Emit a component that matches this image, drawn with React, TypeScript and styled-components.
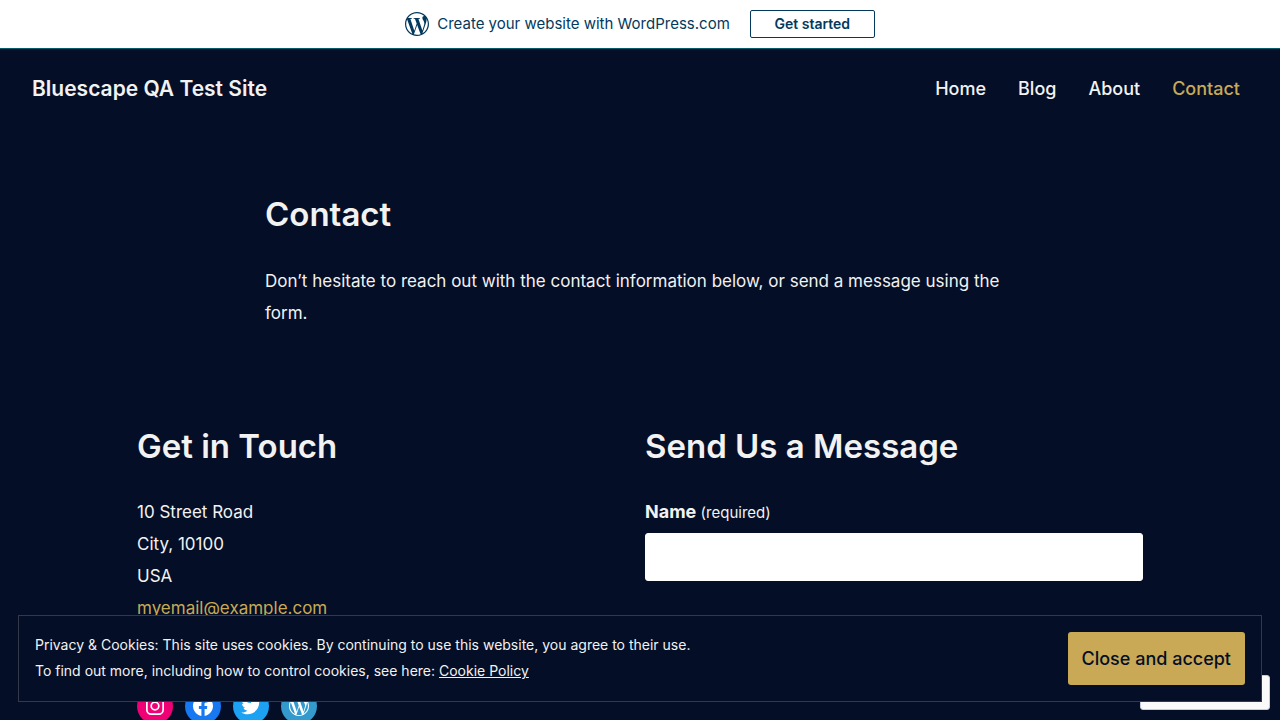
import React from "react";
import styled, { createGlobalStyle } from "styled-components";

const navy = "#040e26";
const text = "#f2f2f2";
const gold = "#c9a955";
const teal = "#02395c";

const GlobalStyle = createGlobalStyle`
  *, *::before, *::after { box-sizing: border-box; }
  body {
    margin: 0;
    background: ${navy};
    color: ${text};
    font-family: Inter, "Liberation Sans", sans-serif;
    font-size: 17px;
    line-height: 32px;
  }
`;

const PromoBar = styled.div`
  display: flex;
  align-items: center;
  justify-content: center;
  height: 49px;
  background: #fff;
  border-bottom: 1px solid #055d6b;
  color: ${teal};
  font-size: 15px;
`;

const PromoText = styled.span`
  margin: 0 20px 0 8px;
`;

const PromoButton = styled.button`
  width: 125px;
  height: 28px;
  padding: 0;
  border: 1px solid ${teal};
  border-radius: 2px;
  background: #fff;
  color: ${teal};
  font: 600 14px/20px Inter, "Liberation Sans", sans-serif;
`;

const Header = styled.header`
  display: flex;
  align-items: center;
  justify-content: space-between;
  padding: 24px 40px 24px 32px;
`;

const SiteTitle = styled.a`
  color: ${text};
  font-size: 21px;
  font-weight: 600;
  text-decoration: none;
`;

const Nav = styled.nav`
  display: flex;
  gap: 32px;
`;

const NavLink = styled.a<{ $current?: boolean }>`
  color: ${(p) => (p.$current ? gold : text)};
  font-size: 18px;
  font-weight: 500;
  text-decoration: none;
`;

const Intro = styled.section`
  max-width: 750px;
  margin: 61px auto 0;
`;

const Title = styled.h1`
  margin: 0 0 27px;
  font-size: 33px;
  line-height: 48px;
  font-weight: 600;
`;

const Paragraph = styled.p`
  margin: 0;
`;

const Columns = styled.div`
  display: grid;
  grid-template-columns: 1fr 1fr;
  gap: 10px;
  max-width: 1006px;
  margin: 93px auto 0;
`;

const SectionTitle = styled(Title).attrs({ as: "h2" })`
  margin-bottom: 26px;
`;

const Address = styled.address`
  font-style: normal;
`;

const MailLink = styled.a`
  color: ${gold};
  text-decoration: none;
`;

const SocialList = styled.ul`
  display: flex;
  gap: 12px;
  margin: 64px 0 0;
  padding: 0;
  list-style: none;
`;

const SocialLink = styled.a<{ $color: string }>`
  display: flex;
  align-items: center;
  justify-content: center;
  width: 36px;
  height: 36px;
  border-radius: 50%;
  background: ${(p) => p.$color};
  color: #fff;
`;

const Label = styled.label`
  display: block;
  margin-bottom: 4px;
  font-size: 18px;
  font-weight: 700;
`;

const Required = styled.span`
  font-size: 15px;
  font-weight: 400;
`;

const TextField = styled.input`
  display: block;
  width: 100%;
  height: 48px;
  padding: 0 16px;
  border: 1px solid #fff;
  border-radius: 3px;
  background: #fff;
  font: inherit;
`;

const FollowWidget = styled.button`
  position: fixed;
  right: 10px;
  bottom: 10px;
  width: 130px;
  height: 35px;
  padding: 0;
  border: 1px solid #c3d0dc;
  border-radius: 3px;
  background: #fafafa;
`;

const CookieBanner = styled.aside`
  position: fixed;
  right: 18px;
  bottom: 18px;
  left: 18px;
  display: flex;
  align-items: flex-start;
  justify-content: space-between;
  padding: 16px;
  border: 1px solid #33394a;
  background: ${navy};
  font-size: 14px;
  line-height: 26px;
`;

const PolicyLink = styled.a`
  color: inherit;
`;

const AcceptButton = styled.button`
  height: 53px;
  padding: 0 14px;
  border: 0;
  border-radius: 3px;
  background: ${gold};
  color: ${navy};
  font: 500 18px/32px Inter, "Liberation Sans", sans-serif;
`;

const Glyph = ({ size, children }: { size: number; children: React.ReactNode }) => (
  <svg width={size} height={size} viewBox="0 0 24 24" fill="currentColor" aria-hidden="true">
    {children}
  </svg>
);

const wordpressPath =
  "M12.158,12.786L9.46,20.625c0.806,0.237,1.657,0.366,2.54,0.366c1.047,0,2.051-0.181,2.986-0.51c-0.024-0.038-0.046-0.079-0.065-0.124L12.158,12.786z M3.009,12c0,3.559,2.068,6.634,5.067,8.092L3.788,8.341C3.289,9.459,3.009,10.696,3.009,12z M18.069,11.546c0-1.112-0.399-1.881-0.741-2.48c-0.456-0.741-0.883-1.368-0.883-2.109c0-0.826,0.627-1.596,1.51-1.596c0.04,0,0.078,0.005,0.116,0.007C16.472,3.904,14.34,3.009,12,3.009c-3.141,0-5.904,1.612-7.512,4.052c0.211,0.007,0.41,0.011,0.579,0.011c0.94,0,2.396-0.114,2.396-0.114C7.947,6.93,8.004,7.642,7.52,7.699c0,0-0.487,0.057-1.029,0.085l3.274,9.739l1.968-5.901l-1.401-3.838C9.848,7.756,9.389,7.699,9.389,7.699C8.904,7.67,8.961,6.93,9.446,6.958c0,0,1.484,0.114,2.368,0.114c0.94,0,2.397-0.114,2.397-0.114c0.485-0.028,0.542,0.684,0.057,0.741c0,0-0.488,0.057-1.029,0.085l3.249,9.665l0.897-2.996C17.841,13.284,18.069,12.316,18.069,11.546z M19.889,7.686c0.039,0.286,0.06,0.593,0.06,0.924c0,0.912-0.171,1.938-0.684,3.22l-2.746,7.94c2.673-1.558,4.47-4.454,4.47-7.771C20.991,10.436,20.591,8.967,19.889,7.686z M12,22C6.486,22,2,17.514,2,12C2,6.486,6.486,2,12,2c5.514,0,10,4.486,10,10C22,17.514,17.514,22,12,22z";
const facebookPath =
  "M12 2C6.5 2 2 6.5 2 12c0 5 3.7 9.1 8.4 9.9v-7H7.9V12h2.5V9.8c0-2.5 1.5-3.9 3.8-3.9 1.1 0 2.2.2 2.2.2v2.5h-1.3c-1.2 0-1.6.8-1.6 1.6V12h2.8l-.4 2.9h-2.3v7C18.3 21.1 22 17 22 12c0-5.5-4.5-10-10-10z";
const twitterPath =
  "M22.23,5.924c-0.736,0.326-1.527,0.547-2.357,0.646c0.847-0.508,1.498-1.312,1.804-2.27c-0.793,0.47-1.671,0.812-2.606,0.996C18.324,4.498,17.257,4,16.077,4c-2.266,0-4.103,1.837-4.103,4.103c0,0.322,0.036,0.635,0.106,0.935C8.67,8.867,5.647,7.234,3.623,4.751C3.27,5.357,3.067,6.062,3.067,6.814c0,1.424,0.724,2.679,1.825,3.415c-0.673-0.021-1.305-0.206-1.859-0.513c0,0.017,0,0.034,0,0.052c0,1.988,1.414,3.647,3.292,4.023c-0.344,0.094-0.707,0.144-1.081,0.144c-0.264,0-0.521-0.026-0.772-0.074c0.522,1.63,2.038,2.816,3.833,2.85c-1.404,1.1-3.174,1.756-5.096,1.756c-0.331,0-0.658-0.019-0.979-0.057c1.816,1.164,3.973,1.843,6.29,1.843c7.547,0,11.675-6.252,11.675-11.675c0-0.178-0.004-0.355-0.012-0.531C20.985,7.47,21.68,6.747,22.23,5.924z";

const socials = [
  {
    name: "Instagram",
    color: "#f00075",
    art: (
      <g fill="none" stroke="currentColor" strokeWidth="1.7">
        <rect x="3.85" y="3.85" width="16.3" height="16.3" rx="4.4" />
        <circle cx="12" cy="12" r="3.8" />
        <circle cx="16.8" cy="7.2" r="1.1" fill="currentColor" stroke="none" />
      </g>
    ),
  },
  { name: "Facebook", color: "#1778f2", art: <path d={facebookPath} /> },
  { name: "Twitter", color: "#1da1f2", art: <path d={twitterPath} /> },
  { name: "WordPress", color: "#3499cd", art: <path d={wordpressPath} /> },
];

export default function App() {
  return (
    <>
      <GlobalStyle />
      <PromoBar>
        <svg width="24" height="24" viewBox="2 2 20 20" fill="currentColor" aria-hidden="true">
          <path d={wordpressPath} />
        </svg>
        <PromoText>Create your website with WordPress.com</PromoText>
        <PromoButton>Get started</PromoButton>
      </PromoBar>
      <Header>
        <SiteTitle href="#">Bluescape QA Test Site</SiteTitle>
        <Nav>
          <NavLink href="#">Home</NavLink>
          <NavLink href="#">Blog</NavLink>
          <NavLink href="#">About</NavLink>
          <NavLink href="#" $current>Contact</NavLink>
        </Nav>
      </Header>
      <main>
        <Intro>
          <Title>Contact</Title>
          <Paragraph>
            Don’t hesitate to reach out with the contact information below, or send a message using the form.
          </Paragraph>
        </Intro>
        <Columns>
          <section>
            <SectionTitle>Get in Touch</SectionTitle>
            <Address>
              10 Street Road<br />
              City, 10100<br />
              USA<br />
              <MailLink href="mailto:myemail@example.com">myemail@example.com</MailLink>
            </Address>
            <SocialList>
              {socials.map((s) => (
                <li key={s.name}>
                  <SocialLink href="#" $color={s.color} aria-label={s.name}>
                    <Glyph size={24}>{s.art}</Glyph>
                  </SocialLink>
                </li>
              ))}
            </SocialList>
          </section>
          <form>
            <SectionTitle>Send Us a Message</SectionTitle>
            <Label htmlFor="name">
              Name <Required>(required)</Required>
            </Label>
            <TextField id="name" type="text" required />
          </form>
        </Columns>
      </main>
      <FollowWidget aria-label="Site menu" />
      <CookieBanner>
        <div>
          Privacy &amp; Cookies: This site uses cookies. By continuing to use this website, you agree to their use.
          <br />
          To find out more, including how to control cookies, see here: <PolicyLink href="#">Cookie Policy</PolicyLink>
        </div>
        <AcceptButton>Close and accept</AcceptButton>
      </CookieBanner>
    </>
  );
}
